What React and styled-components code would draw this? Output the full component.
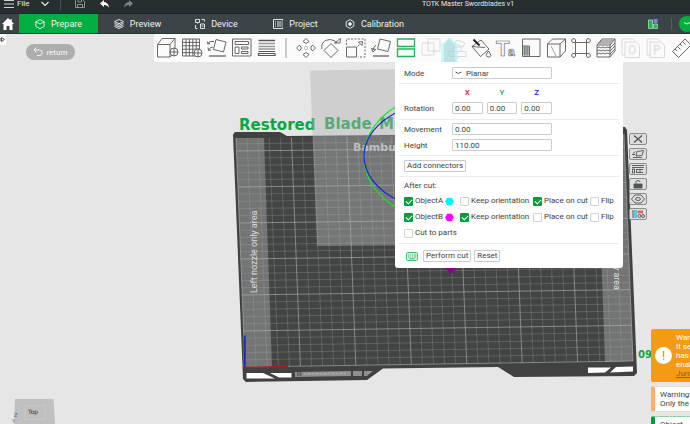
import { useState } from "react";
import styled, { createGlobalStyle } from "styled-components";

const GlobalStyle = createGlobalStyle`
  * {
    box-sizing: border-box;
  }
  body {
    margin: 0;
    overflow: hidden;
    font-family: Roboto, "Noto Sans", sans-serif;
    font-size: 8px;
    color: #3d4142;
  }
  button,
  input,
  select {
    font: inherit;
    color: inherit;
    margin: 0;
  }
`;

const Page = styled.div`
  display: flex;
  flex-direction: column;
  min-height: 100vh;
`;

/* ---------- title bar ---------- */

const TitleBar = styled.header`
  display: flex;
  align-items: flex-start;
  height: 14px;
  background: #262e30;
  border-bottom: 1px solid #1d2426;
  color: #e6e8e8;
`;

const MenuGroup = styled.div`
  display: flex;
  align-items: center;
  width: 246px;
  height: 8px;
  padding-left: 4px;
`;

const PlainButton = styled.button`
  display: flex;
  align-items: center;
  gap: 3px;
  padding: 0;
  border: 0;
  background: none;
  line-height: 8px;
  margin-right: ${(p) => p.$after || 0}px;
`;

const TitleDivider = styled.span`
  width: 1px;
  height: 12px;
  margin-right: 14px;
  background: #465052;
`;

const Title = styled.h1`
  flex: 1;
  margin: 0;
  font-size: 7px;
  font-weight: 400;
  line-height: 8px;
  text-align: center;
`;

/* ---------- tabs ---------- */

const TabBar = styled.nav`
  display: flex;
  align-items: stretch;
  height: 20px;
  background: #3b4446;
  border-bottom: 1px solid #2c3436;
`;

const HomeButton = styled.button`
  display: flex;
  align-items: center;
  justify-content: center;
  width: 19px;
  padding: 0 4px 0 0;
  border: 0;
  background: none;
  flex: none;
`;

const Tab = styled.button`
  display: flex;
  align-items: center;
  justify-content: center;
  gap: 6px;
  width: 79px;
  padding: 0;
  border: 0;
  background: ${(p) => (p.$active ? "#00ae42" : "none")};
  color: #f2f4f4;
  font-size: 9px;
`;

const TabActions = styled.div`
  display: flex;
  align-items: center;
  gap: 13px;
  margin-left: auto;
  margin-right: -5px;
`;

const TabDivider = styled.span`
  width: 1px;
  height: 12px;
  background: #566063;
  margin-right: -6px;
`;

const SliceButton = styled.button`
  display: flex;
  align-items: center;
  justify-content: center;
  width: 16px;
  height: 16px;
  padding: 0;
  border: 0;
  border-radius: 50%;
  background: #00ae42;
`;

/* ---------- viewport ---------- */

const Viewport = styled.main`
  position: relative;
  flex: 1;
  min-height: 390px;
  overflow: hidden;
  background: #e6e6e6;
`;

const SceneSvg = styled.svg`
  position: absolute;
  inset: 0;
  width: 100%;
  height: 100%;
`;

const TopRow = styled.div`
  position: relative;
  display: flex;
  align-items: flex-start;
`;

const Gutter = styled.div`
  display: flex;
  align-items: flex-start;
  gap: 20px;
  width: 154px;
  flex: none;
`;

const SideHandle = styled.button`
  width: 6px;
  height: 11px;
  padding: 0;
  border: 0;
  background: #fafafa;
  display: flex;
  align-items: center;
`;

const ReturnButton = styled.button`
  display: flex;
  align-items: center;
  justify-content: center;
  gap: 3px;
  width: 49px;
  height: 16px;
  margin-top: 10px;
  padding: 0;
  border: 0;
  border-radius: 8px;
  background: #adadad;
  color: #fafafa;
`;

const Toolbar = styled.div`
  position: relative;
  flex: 1;
  display: flex;
  gap: 5px;
  height: 28px;
  padding: 4px 0 4px 3px;
  background: #fbfbfb;
`;

const Tool = styled.button`
  flex: none;
  width: 20px;
  height: 20px;
  padding: 0;
  border: 0;
  background: none;
  color: ${(p) => (p.$active ? "#1fb457" : p.$faded ? "#d4d6d6" : "#56595a")};

  svg {
    display: block;
    overflow: visible;
  }
`;

const ToolDivider = styled.span`
  flex: none;
  width: 2px;
  margin: 0 4px 0 3px;
  background: #c9cbcb;
`;

const GizmoMarker = styled.svg`
  position: absolute;
  left: 286px;
  top: 3px;
  opacity: 0.75;
  pointer-events: none;
`;

/* ---------- cut panel ---------- */

const Panel = styled.form`
  position: absolute;
  left: 395px;
  top: 28px;
  width: 228px;
  padding: 0 4px;
  background: #ffffff;
  border-radius: 0 0 3px 3px;
`;

const Section = styled.section`
  display: flex;
  flex-direction: column;
  gap: ${(p) => p.$gap || 4}px;
  padding: ${(p) => p.$top || 4}px 5px ${(p) => p.$bottom || 4}px;
  border-bottom: 1px solid #ededed;

  &:last-child {
    border-bottom: 0;
  }
`;

const Field = styled.div`
  display: grid;
  grid-template-columns: 48px 1fr;
  align-items: center;
  padding-right: 62px;
  min-height: ${(p) => (p.$short ? 10 : 12)}px;
`;

const Triple = styled.div`
  display: grid;
  grid-template-columns: repeat(3, 1fr);
  gap: 4px;
`;

const Axis = styled.span`
  text-align: center;
  line-height: 10px;
  font-weight: 500;
  color: ${(p) => p.$color};
`;

const NumberInput = styled.input`
  width: 100%;
  min-width: 0;
  height: 12px;
  padding: 0 2px;
  border: 1px solid #c9cccd;
  border-radius: 1px;
  background: #fff;
  outline: none;
`;

const SelectWrap = styled.div`
  position: relative;

  svg {
    position: absolute;
    left: 3px;
    top: 4px;
    pointer-events: none;
  }
`;

const ModeSelect = styled.select`
  display: block;
  appearance: none;
  width: 100%;
  height: 12px;
  padding: 0 0 0 13px;
  border: 1px solid #c9cccd;
  border-radius: 1px;
  background: #fff;
`;

const ActionRow = styled.div`
  display: flex;
  align-items: center;
  gap: 3px;
`;

const Action = styled.button`
  height: 12px;
  padding: 0 2px;
  border: 1px solid #c9cccd;
  border-radius: 1px;
  background: #fff;
  line-height: 10px;
`;

const Shortcuts = styled.button`
  display: flex;
  padding: 0 2px;
  border: 0;
  background: none;
`;

const GroupTitle = styled.div`
  line-height: 10px;
  margin-bottom: -1px;
`;

const ObjectRow = styled.div`
  display: grid;
  grid-template-columns: 41px 15px 73px 57px 1fr;
  align-items: center;
  height: 10px;
`;

const CheckLabel = styled.label`
  display: flex;
  align-items: center;
  gap: 2px;
  line-height: 10px;
  white-space: nowrap;
`;

const CheckInput = styled.input`
  appearance: none;
  flex: none;
  width: 9px;
  height: 9px;
  border: 1px solid #cfd2d3;
  border-radius: 1px;
  background: #fff;
  display: grid;
  place-items: center;

  &:checked {
    background: #059c3c;
    border-color: #059c3c;
  }

  &:checked::after {
    content: "";
    width: 5px;
    height: 3px;
    border-left: 1px solid #fff;
    border-bottom: 1px solid #fff;
    transform: rotate(-45deg);
    margin-bottom: 1px;
  }
`;

/* ---------- plate buttons ---------- */

const PlateActions = styled.div`
  position: absolute;
  left: 629px;
  top: 99px;
  display: flex;
  flex-direction: column;
  gap: 3px;
`;

const PlateButton = styled.button`
  width: 18px;
  height: 12px;
  padding: 0;
  border: 1px solid #8b8d8d;
  border-radius: 2px;
  background: #dedede;
  color: #505353;

  svg {
    display: block;
  }
`;

/* ---------- notifications ---------- */

const Notices = styled.aside`
  position: absolute;
  left: calc(100% - 39px);
  top: 295px;
  width: 220px;
  display: flex;
  flex-direction: column;
  gap: 4px;
`;

const Notice = styled.div`
  display: flex;
  align-items: center;
  gap: 4px;
  padding: 3px 3px 3px ${(p) => (p.$solid ? 3 : 5)}px;
  border-radius: 2px;
  line-height: 9px;
  white-space: nowrap;
  background: ${(p) => (p.$solid ? p.$color : "#fff")};
  color: ${(p) => (p.$solid ? "#fff" : "inherit")};
  border: 1px solid ${(p) => (p.$solid ? p.$color : p.$edge)};
  border-left: ${(p) => (p.$solid ? 1 : 4)}px solid ${(p) => p.$color};

  a {
    color: #8a6420;
  }
`;

const tabs = [
  ["Prepare", "cube"],
  ["Preview", "stack"],
  ["Device", "device"],
  ["Project", "project"],
  ["Calibration", "calibration"],
];

const tabIcons = {
  cube: (
    <>
      <path d="M5 .6 9.2 2.8V7.4L5 9.6.8 7.4V2.8z" />
      <path d="M.8 2.8 5 5 9.2 2.8" />
    </>
  ),
  stack: (
    <>
      <path d="M5 .5 9.5 2.6 5 4.7.5 2.6z" />
      <path d="M.5 4.2 5 6.3 9.5 4.2M.5 5.8 5 7.9 9.5 5.8M.5 7.4 5 9.5 9.5 7.4" />
    </>
  ),
  device: (
    <>
      <path d="M.5.5h4v3h-4zM2.5 3.5v1M6.5.5h3v2M.5 6v3.5h2" />
      <path d="M5.5 5h4v4.5h-4zM6.5 7h2" />
    </>
  ),
  project: <path d="M.5.5h9.5v9H.5zM2 3h1M4 3h4.5M2 5h1M4 5h4.5M2 7h1M4 7h4.5" />,
  calibration: (
    <>
      <path d="M5 .6 8.8 2.8V7.2L5 9.4 1.2 7.2V2.8z" />
      <path d="M5 3v4M3 5h4" strokeWidth="1.6" />
    </>
  ),
};

const plus = (cx, cy) => (
  <>
    <circle cx={cx} cy={cy} r="4" fill="#fbfbfb" />
    <path d={`M${cx - 4} ${cy}h8M${cx} ${cy - 4}v8`} />
  </>
);

const toolIcons = {
  addCube: (
    <>
      <path d="M.5 6.5h12.5V19H.5zM.5 6.5 5 .5h13l-5 6M18 .5V11M13 19l3-3" />
      {plus(17, 14)}
    </>
  ),
  addPlate: (
    <>
      <path d="M.5 1h17v17H.5zM4 1v17M7.4 1v17M10.8 1v17M14.2 1v17M.5 4.4h17M.5 7.8h17M.5 11.2h17M.5 14.6h17" />
      {plus(16, 15)}
    </>
  ),
  orient: (
    <>
      <path d="m9 1.5 10 2.5-2.5 10-10-2.5zM7 3.5H3.5Q1.5 4 .8 6M6 9Q3 9 1.5 12" />
      <path d="m.5 3.5.3 2.5 2.5-.5M1 9.5l.5 3L4 12" />
      <path d="M2 18h17" strokeWidth="2" stroke="#999" />
    </>
  ),
  arrange: (
    <>
      <path d="M.5 1h18.5v17H.5z" />
      <path d="M3 3.5h13.5v3H3zM3 9h4v6.5H3zM9.5 9H16v2H9.5zM9.5 13.5H16v2H9.5z" />
    </>
  ),
  layers: (
    <>
      <path d="M1.5 2.5h16.5" strokeWidth="1.5" />
      <path d="M1.5 5.5h16.5M1.5 8.5h16.5M1.5 11h16.5" strokeWidth="1.5" stroke="#999" />
      <path d="M1.5 13.5h16.5M1.5 15.5h16.5v2H1.5z" strokeWidth="1.2" />
    </>
  ),
  move: (
    <>
      <path d="m10 .5 3 3-3 2-3-2zM10 19.5l3-3-3-2-3 2zM.5 10l3-3 2 3-2 3zM19.5 10l-3-3-2 3 2 3z" />
      <path d="M10 8v.5M10 11.5v.5M8 10h.5M11.5 10h.5" strokeWidth="1.5" />
    </>
  ),
  rotate: (
    <>
      <path d="m10 5.5 7 7-7 7-7-7z" />
      <path d="M.8 11Q0 5 4.5 2.5 9 .5 13 2.5q2 1 3 2.5M13.5 5h5.5l.5-4.5z" />
    </>
  ),
  scale: (
    <>
      <path d="M.5 9h10v10H.5z" />
      <path d="M.5 7V1h18.5v18h-7" strokeDasharray="2 1.5" />
      <path d="m11.5 8.5 2-2M12.5 4l4-.5-.5 4-3.5-3.5z" />
    </>
  ),
  lay: (
    <>
      <path d="m9 1 10.5 2.5L17 13.5 6.5 11z" />
      <path d="M5 7Q2.5 9 2 12M.5 10.5l1.3 3.5 3-2.5z" />
      <path d="M2 18h16" strokeWidth="2" stroke="#999" />
    </>
  ),
  cut: <path d="M1.5 1h17v7.5h-17zM1.5 11h17v7.5h-17z" strokeWidth="1.3" />,
  boolean: <path d="M1 5h12v12H1zM7 1h12v12H7z" />,
  support: <path d="M3 13.5h17v5H3zM7 9h8v4.5M7 9v4.5M10.5 2l8.5 3-2 4-8-3z" />,
  paint: (
    <>
      <path d="M1 8.5 10 2l8 9-8.5 7.5L1 8.5l13 1" />
      <path d="m2.5 1.5 6 6" strokeWidth="2" stroke="#222" />
      <path d="M17.5 13q-4.5 6 0 6t0-6z" fill="#fbfbfb" />
    </>
  ),
  text: (
    <>
      <text x="0" y="18" fontSize="22" fontFamily="Liberation Sans, sans-serif" fontWeight="700" strokeWidth=".6">
        T
      </text>
      <text x="12" y="18" fontSize="12" fontFamily="Liberation Sans, sans-serif" fontWeight="700" strokeWidth=".6">
        a
      </text>
    </>
  ),
  primitive: (
    <>
      <path d="M8.5 18.5H19V1H1.5v7" />
      <path d="M1.5 8h7v10.5h-7z" />
      <path d="M2 10h6M2 12h6M2 14h6M2 16h6M3.3 8v10M5 8v10M6.8 8v10" strokeWidth=".7" />
    </>
  ),
  seam: (
    <>
      <path d="M1.5 6h12.5v13H1.5zM1.5 6 6.5 1h13L14 6M19.5 1v12L14 19" />
      <path d="m5 8 5 10" stroke="#999" />
    </>
  ),
  assembly: (
    <>
      <path d="M4.5 4.5h11v11h-11z" />
      <path d="M4.5 4.5V2A2 2 0 1 0 2 4.5zM15.5 4.5V2A2 2 0 1 1 18 4.5zM4.5 15.5V18A2 2 0 1 1 2 15.5zM15.5 15.5V18a2 2 0 1 0 2.5-2.5z" />
    </>
  ),
  fuzzy: (
    <>
      <path d="M1 7h13v12H1zM1 7l5-6h13l-5 6M19 1v12l-5 6M2.5 5h13M4 3h13" />
      <path d="m1 10 2-1 2 1 2-1 2 1 2-1 3 1 5-5M1 13l2-1 2 1 2-1 2 1 2-1 3 1 5-5M1 16l2-1 2 1 2-1 2 1 2-1 3 1 5-5" />
    </>
  ),
  letterO: (
    <>
      <path d="M4 17H1V1h11l2 2M4 4h11l3.5 3.5V19.5H4z" />
      <text x="7" y="16" fontSize="12" strokeWidth=".5">O</text>
    </>
  ),
  letterP: (
    <>
      <path d="M4 17H1V1h11l2 2M4 4h11l3.5 3.5V19.5H4z" />
      <text x="7" y="16" fontSize="12" strokeWidth=".5">P</text>
    </>
  ),
  measure: (
    <path d="M1.5 13.5 14 1l6 6L7.5 19.5zM4 11l2 2M6.5 8.5l3 3M9 6l2 2M11.5 3.5l3 3" />
  ),
};

const plateTools = ["addCube", "addPlate", "orient", "arrange", "layers"];
const editTools = [
  "move", "rotate", "scale", "lay", "cut", "boolean", "support", "paint", "text",
  "primitive", "seam", "assembly", "fuzzy", "letterO", "letterP", "measure",
];
const fadedTools = ["boolean", "support", "letterO", "letterP"];

const plateIcons = {
  remove: <path d="m4 1.5 8 7M12 1.5l-8 7" strokeWidth="1.3" />,
  orient: <path d="m7 2.5 6.5-1-1.5 5-6 .5zM5.5 2.5 3 4.5M5 5.5H2M3 8.5h9" />,
  arrange: <path d="M2 1.5h12M2 3.5h12M2.5 5v4h2V5zM6.5 5.5H13M6.5 8.5H13M6.5 5v4M10 5v4" />,
  lock: (
    <>
      <path d="M4 5h8v4H4z" fill="currentColor" />
      <path d="M6 4.5V3q0-1.5 2-1.5t2 1.5" />
    </>
  ),
  settings: (
    <>
      <path d="M5 1h6l3.5 4L11 9H5L1.5 5z" />
      <ellipse cx="8" cy="5" rx="2.5" ry="1.5" />
    </>
  ),
  filament: (
    <>
      <path d="M3 1v8" strokeWidth="1" />
      <path d="M5.5 1v8" stroke="#5cc4dc" strokeWidth="3" />
      <path d="M7.5 3H13" stroke="#f0635c" strokeWidth="3" />
      <circle cx="9.5" cy="7" r="1.5" />
      <circle cx="13" cy="7" r="1.5" />
    </>
  ),
};

const Icon = ({ size = 20, width, height, children }) => (
  <svg
    width={width || size}
    height={height || size}
    viewBox={`0 0 ${width || size} ${height || size}`}
    fill="none"
    stroke="currentColor"
    strokeWidth="0.9"
    aria-hidden="true"
  >
    {children}
  </svg>
);

// corners of the printable area: top-left, top-right, bottom-right, bottom-left
const bed = [[236, 138], [624, 134], [633, 361], [245, 367]];

const bedPoint = (u, v) => {
  const [tl, tr, br, bl] = bed;
  return [0, 1].map(
    (i) =>
      (tl[i] * (1 - u) + tr[i] * u) * (1 - v) + (bl[i] * (1 - u) + br[i] * u) * v
  );
};

const gridLine = (a, b) => `M${a.join(" ")}L${b.join(" ")}`;

const gridPath = (major) => {
  let d = "";
  for (let i = 0; i <= 35; i++) {
    if ((i % 5 === 0) === major) d += gridLine(bedPoint(i / 35, 0), bedPoint(i / 35, 1));
  }
  for (let i = 0; i <= 31; i++) {
    if ((i % 5 === 0) === major) d += gridLine(bedPoint(0, 1 - i / 31.8), bedPoint(1, 1 - i / 31.8));
  }
  return d;
};

const Scene = () => (
  <SceneSvg viewBox="0 34 690 390" preserveAspectRatio="xMinYMin slice" aria-hidden="true">
    <path
      d="M233 134.5 235 132h45l7 4 310-3 8-6h20l2 3 10 243-3 3-120 1-16-10-115 1.5-16 11.5-121 2-3-3z"
      fill="#3f4241"
    />
    <path d="M236 138 624 134 633 361 245 367z" fill="#434544" />
    <path d="M236 138h28l8 229h-27zM597 134h27l9 227-28 1z" fill="#737574" />
    <path d={gridPath(false)} stroke="#a9abaa" strokeOpacity=".35" strokeWidth=".8" />
    <path d={gridPath(true)} stroke="#b3b5b4" strokeOpacity=".6" strokeWidth="1" />

    <g fontFamily="DejaVu Sans" fontWeight="700">
      <g fontSize="15" fill="#0ca444">
        <text x="239" y="130">Restored</text>
        <text x="324" y="129">Blade</text>
        <text x="379" y="129">M</text>
      </g>
      <text x="353" y="151" fontSize="11" fill="#c4c6c5">Bambu</text>
      <text x="638" y="358" fontSize="10" fill="#0ca444">09</text>
    </g>
    <g fontSize="9" fill="#dcdedd">
      <text transform="translate(257 293) rotate(-90)">Left nozzle only area</text>
      <text transform="translate(614 290) rotate(90)" textAnchor="end">Right nozzle only area</text>
    </g>

    <path d="M310 70.5 600 66l-8 178-275 2z" fill="#b4b4b4" fillOpacity=".45" />
    <g fill="none" strokeWidth="1.2">
      <ellipse cx="451" cy="157" rx="87" ry="65" stroke="#12e81e" />
      <ellipse cx="451" cy="156" rx="87" ry="56" stroke="#2222e0" />
    </g>
    <path d="M445 262h12v6l-6 6-6-6z" fill="#8c008c" />

    <path d="M246.5 373H263l12 5.5h-28.5zM270 373h21.5v4.5H279z" fill="#fff" />
    <path d="M588 367.5h23l-6 5-17 .5zM616 367l17-.5v5l-23 1z" fill="#fff" />
    <path d="m295 372 56-1v5l-56 1zM353 371h9v5h-9zM364 371h9l-6 5h-3z" fill="#8d908f" />
    <path d="M297 373h1.5M299.5 373h2M297 375h1.5M299.5 375h2" stroke="#333" strokeWidth="1.2" />
    <path d="m304 374 43-.7" stroke="#a3a6a5" strokeWidth="2" strokeDasharray="2 1 4 1" />

    <path d="M243.5 341v26" stroke="#0a9a3a" />
    <path d="M244.8 335.5V367" stroke="#2726a0" strokeWidth="1.8" />
    <path d="M245 367.3 288 366.5" stroke="#b11a14" strokeWidth="1.4" />

    <path d="M15 399h38.5l1.5 25H14z" fill="#c0c0c0" />
    <path d="M25 405.5h20v14H24.5z" fill="none" stroke="#cdcdcd" strokeWidth=".6" />
    <text x="28" y="414" fontFamily="DejaVu Sans" fontSize="6" fill="#333">Top</text>
    <text x="14" y="417" fontSize="6" fill="#4a6fc4">Z</text>
    <text x="12" y="423" fontSize="5" fill="#4a9a5a">Y</text>
  </SceneSvg>
);

const Check = ({ label, checked = false }) => {
  const [on, setOn] = useState(checked);
  return (
    <CheckLabel>
      <CheckInput type="checkbox" checked={on} onChange={() => setOn(!on)} />
      {label}
    </CheckLabel>
  );
};

const ObjectOptions = ({ name, color, keep, place }) => (
  <ObjectRow>
    <Check label={name} checked />
    <svg width="9" height="9" viewBox="0 0 9 9" aria-hidden="true">
      <path d="M2.3.7h4.4L9 4.5 6.7 8.3H2.3L0 4.5z" fill={color} />
    </svg>
    <Check label="Keep orientation" checked={keep} />
    <Check label="Place on cut" checked={place} />
    <Check label="Flip" />
  </ObjectRow>
);

const CutPanel = () => (
  <Panel onSubmit={(e) => e.preventDefault()}>
    <Section $top={5}>
      <Field>
        <label htmlFor="mode">Mode</label>
        <SelectWrap>
          <ModeSelect id="mode" defaultValue="Planar">
            <option>Planar</option>
            <option>Dovetail</option>
          </ModeSelect>
          <Icon width={7} height={4}>
            <path d="M.5 1q3 3 6 0" />
          </Icon>
        </SelectWrap>
      </Field>
    </Section>
    <Section $bottom={5}>
      <Field $short>
        <span />
        <Triple>
          <Axis $color="#f01818">X</Axis>
          <Axis $color="#12a344">Y</Axis>
          <Axis $color="#2020ee">Z</Axis>
        </Triple>
      </Field>
      <Field>
        <span>Rotation</span>
        <Triple>
          <NumberInput aria-label="Rotation X" defaultValue="0.00" />
          <NumberInput aria-label="Rotation Y" defaultValue="0.00" />
          <NumberInput aria-label="Rotation Z" defaultValue="0.00" />
        </Triple>
      </Field>
    </Section>
    <Section $top={3}>
      <Field>
        <label htmlFor="movement">Movement</label>
        <NumberInput id="movement" defaultValue="0.00" />
      </Field>
      <Field>
        <label htmlFor="height">Height</label>
        <NumberInput id="height" defaultValue="110.00" />
      </Field>
    </Section>
    <Section>
      <ActionRow>
        <Action type="button">Add connectors</Action>
      </ActionRow>
    </Section>
    <Section $gap={6} $bottom={5}>
      <GroupTitle>After cut:</GroupTitle>
      <ObjectOptions name="ObjectA" color="#00f4ff" place />
      <ObjectOptions name="ObjectB" color="#ff00ff" keep />
      <Check label="Cut to parts" />
    </Section>
    <Section $top={6} $bottom={6}>
      <ActionRow>
        <Shortcuts type="button" aria-label="Shortcuts">
          <svg width="12" height="9" viewBox="0 0 12 9" fill="none" stroke="#3dbb6c" aria-hidden="true">
            <rect x=".5" y=".5" width="11" height="8" rx="1" fill="#d9f3e3" />
            <path d="M2 3h1M4 3h1M6 3h1M8 3h2M2 5h1M4 5h1M6 5h1M8 5h2M3.5 6.8h5" />
          </svg>
        </Shortcuts>
        <Action>Perform cut</Action>
        <Action type="reset">Reset</Action>
      </ActionRow>
    </Section>
  </Panel>
);

const ToolButton = ({ name }) => (
  <Tool aria-label={name} $active={name === "cut"} $faded={fadedTools.includes(name)}>
    <Icon>{toolIcons[name]}</Icon>
  </Tool>
);

export default function App() {
  const [tab, setTab] = useState("Prepare");

  return (
    <Page>
      <GlobalStyle />
      <TitleBar>
        <MenuGroup>
          <PlainButton $after={11}>
            <Icon width={10} height={8}>
              <path d="M0 .5h10M0 4h10M0 7.5h10" />
            </Icon>
            File
          </PlainButton>
          <PlainButton aria-label="More" $after={11}>
            <Icon width={8} height={6}>
              <path d="m.5 1 3.5 3.5L7.5 1" strokeWidth="1.2" />
            </Icon>
          </PlainButton>
          <TitleDivider />
          <PlainButton aria-label="Save" $after={15}>
            <svg width="10" height="8" viewBox="0 0 10 8" fill="none" stroke="#8b9294" aria-hidden="true">
              <path d="M.5 0v7.5h9V1.5L8 0M2.5 7.5v-3h5v3M3 0v2h3.5V0" />
            </svg>
          </PlainButton>
          <PlainButton aria-label="Undo" $after={15}>
            <svg width="9" height="8" viewBox="0 0 9 8" aria-hidden="true">
              <path d="M4 0 0 3.5 4 7V5q3.5-.3 5 2.5Q8.5 2.5 4 2z" fill="#fff" />
            </svg>
          </PlainButton>
          <PlainButton aria-label="Redo">
            <svg width="9" height="8" viewBox="0 0 9 8" aria-hidden="true">
              <path d="M5 0 9 3.5 5 7V5Q1.5 4.7 0 7.5.5 2.5 5 2z" fill="#7d8587" />
            </svg>
          </PlainButton>
        </MenuGroup>
        <Title>TOTK Master Swordblades v1</Title>
      </TitleBar>

      <TabBar>
        <HomeButton aria-label="Home">
          <svg width="12" height="12" viewBox="0 0 12 12" aria-hidden="true">
            <path d="M6 0 0 6h1.5v6h3V8h3v4h3V6H12L9.8 3.8V1H8.5v1.5z" fill="#fff" />
          </svg>
        </HomeButton>
        {tabs.map(([label, icon]) => (
          <Tab key={label} $active={tab === label} onClick={() => setTab(label)}>
            <Icon size={10}>{tabIcons[icon]}</Icon>
            {label}
          </Tab>
        ))}
        <TabActions>
          <PlainButton aria-label="Layout">
            <svg width="10" height="10" viewBox="0 0 10 10" aria-hidden="true">
              <path d="M.5 1h4v8.5h-4z" fill="#21b457" stroke="#bfe8cd" strokeWidth=".7" />
              <path d="M5.5 0h4v4h-4z" fill="#8d7be0" />
              <path d="M5.5 5h4v4.5h-4z" fill="#21b457" stroke="#bfe8cd" strokeWidth=".7" />
            </svg>
          </PlainButton>
          <TabDivider />
          <SliceButton aria-label="Slice">
            <Icon width={8} height={5}>
              <path d="M1 1.5q3 3 6 0" stroke="#fff" />
            </Icon>
          </SliceButton>
        </TabActions>
      </TabBar>

      <Viewport>
        <Scene />
        <TopRow>
          <Gutter>
            <SideHandle aria-label="Expand">
              <Icon width={5} height={5}>
                <path d="M0 1v3M1.5.5 4.5 2.5 1.5 4.5z" />
              </Icon>
            </SideHandle>
            <ReturnButton>
              <Icon size={10}>
                <path d="M3.5.5 1 3l2.5 2.5M1 3h5.5a2.7 2.7 0 0 1 0 5.5H4" />
              </Icon>
              return
            </ReturnButton>
          </Gutter>
          <Toolbar>
            {plateTools.map((name) => (
              <ToolButton key={name} name={name} />
            ))}
            <ToolDivider />
            {editTools.map((name) => (
              <ToolButton key={name} name={name} />
            ))}
            <GizmoMarker width="19" height="25" viewBox="0 0 19 25" aria-hidden="true">
              <path d="M9.5 0 19 9h-1.5v16h-16V9H0z" fill="#b9f6f6" />
              <path d="M9 1.5 15 8v17H4V8z" fill="#a3dbde" />
              <path d="M8 16h11M8 21h11M12 11h5" stroke="#c9d2d2" strokeWidth=".8" />
            </GizmoMarker>
          </Toolbar>
        </TopRow>

        <PlateActions>
          {Object.keys(plateIcons).map((name) => (
            <PlateButton key={name} aria-label={name}>
              <Icon width={16} height={10}>{plateIcons[name]}</Icon>
            </PlateButton>
          ))}
        </PlateActions>

        <CutPanel />

        <Notices>
          <Notice $solid $color="#f59a14">
            <svg width="17" height="17" viewBox="0 0 17 17" aria-hidden="true">
              <circle cx="8.5" cy="8.5" r="8.5" fill="#fff" />
              <path d="M8.5 4v6M8.5 11.5v1.5" stroke="#f59a14" strokeWidth="1.5" />
            </svg>
            <div>
              Warning:
              <br />
              It seems
              <br />
              has to
              <br />
              enable
              <br />
              <a href="#jump">Jump to</a>
            </div>
          </Notice>
          <Notice $color="#ffae70" $edge="#f3dccb">
            <div>
              Warning:
              <br />
              Only the
            </div>
          </Notice>
          <Notice $color="#0a9c3a" $edge="#8fd3a6">Object</Notice>
        </Notices>
      </Viewport>
    </Page>
  );
}
